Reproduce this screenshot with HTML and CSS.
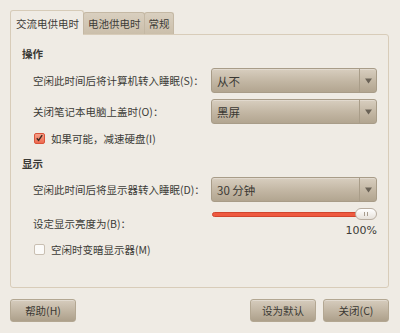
FILE: index.html
```html
<!DOCTYPE html>
<html lang="zh">
<head>
<meta charset="utf-8">
<link rel="stylesheet" href="styles.css">
</head>
<body>
<div class="dialog">
  <div class="tabs">
    <div class="tab active">交流电供电时</div>
    <div class="tab">电池供电时</div>
    <div class="tab">常规</div>
  </div>
  <div class="panel">
    <div class="section">操作</div>
    <div class="row r1">
      <span class="label">空闲此时间后将计算机转入睡眠(S)：</span>
      <div class="combo"><span class="ctext">从不</span><span class="carrow"><svg width="7" height="6" viewBox="0 0 7 6"><path d="M0 0.5h7L3.5 5.5z" fill="#6a6256"/></svg></span></div>
    </div>
    <div class="row r2">
      <span class="label">关闭笔记本电脑上盖时(O)：</span>
      <div class="combo"><span class="ctext">黑屏</span><span class="carrow"><svg width="7" height="6" viewBox="0 0 7 6"><path d="M0 0.5h7L3.5 5.5z" fill="#6a6256"/></svg></span></div>
    </div>
    <div class="check c1">
      <span class="box checked"><svg width="10" height="10" viewBox="0 0 10 10"><path d="M2 5.2 L4 7.6 L8 1.8" fill="none" stroke="#3a2a22" stroke-width="1.6"/></svg></span>
      <span>如果可能，减速硬盘(I)</span>
    </div>
    <div class="section s2">显示</div>
    <div class="row r3">
      <span class="label">空闲此时间后将显示器转入睡眠(D)：</span>
      <div class="combo"><span class="ctext">30 分钟</span><span class="carrow"><svg width="7" height="6" viewBox="0 0 7 6"><path d="M0 0.5h7L3.5 5.5z" fill="#6a6256"/></svg></span></div>
    </div>
    <div class="row bright">
      <span class="label">设定显示亮度为(B)：</span>
      <div class="sliderbox">
        <div class="slider">
          <div class="track"></div>
          <div class="thumb"><span></span><span></span></div>
        </div>
        <div class="value">100%</div>
      </div>
    </div>
    <div class="check c2">
      <span class="box"></span>
      <span>空闲时变暗显示器(M)</span>
    </div>
  </div>
  <div class="buttons">
    <button class="btn">帮助(H)</button>
    <div class="spacer"></div>
    <button class="btn">设为默认</button>
    <button class="btn">关闭(C)</button>
  </div>
</div>
</body>
</html>
```

FILE: styles.css
```css
html, body {
  margin: 0;
  padding: 0;
}
body {
  background: #efebe4;
  width: 400px;
  height: 333px;
  overflow: hidden;
  font-family: "Noto Sans CJK SC", "Noto Sans", "DejaVu Sans", sans-serif;
  font-size: 10.5px;
  color: #3c3b37;
  white-space: nowrap;
}
.dialog {
  display: flex;
  flex-direction: column;
  padding: 10px 11px 0 10px;
}
.tabs {
  display: flex;
  align-items: flex-end;
  height: 24px;
  position: relative;
  z-index: 2;
}
.tab {
  height: 21px;
  line-height: 22px;
  padding: 0 3px 0 4px;
  background: linear-gradient(#d9cfbf, #cbbfab);
  border: 1px solid #c4b8a4;
  border-bottom: none;
  border-radius: 3px 3px 0 0;
  margin-left: -1px;
  color: #3c3b37;
}
.tab.active {
  height: 24px;
  line-height: 26px;
  background: #efebe4;
  border-color: #d6cbb8;
  margin-left: 0;
  padding: 0 4px 0 5px;
  margin-bottom: -1px;
}
.panel {
  height: 252px;
  border: 1px solid #d8ccb9;
  border-radius: 0 3px 3px 3px;
  padding: 0 11px 0 11px;
  display: flex;
  flex-direction: column;
}
.section {
  font-weight: bold;
  height: 16px;
  line-height: 16px;
  margin-top: 11px;
  color: #3a3935;
}
.section.s2 {
  margin-top: 10px;
}
.row {
  display: flex;
  align-items: center;
  padding-left: 11px;
}
.row .label {
  flex: 1;
}
.r1 { margin-top: 6px; }
.r2 { margin-top: 6px; }
.r3 { margin-top: 5px; }
.combo {
  width: 164px;
  height: 23px;
  border: 1px solid #a89c88;
  border-radius: 3px;
  background: linear-gradient(#d8cebf, #c2b6a3 55%, #b2a590);
  display: flex;
  align-items: center;
  box-shadow: inset 0 1px 0 rgba(255,255,255,0.25);
}
.ctext {
  flex: 1;
  padding-left: 5px;
  font-size: 11.5px;
  color: #3a3833;
}
.carrow {
  width: 16px;
  height: 23px;
  border-left: 1px solid #a99d89;
  display: flex;
  align-items: center;
  justify-content: center;
}
.check {
  display: flex;
  align-items: center;
  height: 16px;
  padding-left: 12px;
}
.c1 { margin-top: 6px; }
.c2 { margin-top: 2px; }
.box {
  width: 9px;
  height: 9px;
  border: 1px solid #c9bfb2;
  border-radius: 2px;
  background: #fbfaf8;
  margin-right: 6px;
  display: flex;
  align-items: center;
  justify-content: center;
}
.box.checked {
  border-color: #d9533a;
  background: linear-gradient(#f6a088, #ee6a50);
}
.bright {
  margin-top: 5px;
  height: 32px;
}
.sliderbox {
  width: 166px;
  display: flex;
  flex-direction: column;
  align-items: flex-end;
}
.slider {
  width: 166px;
  height: 12px;
  position: relative;
}
.track {
  position: absolute;
  left: 1px;
  right: 10px;
  top: 4px;
  height: 3px;
  background: #ee5a40;
  border: 1px solid #d2452e;
  border-radius: 3px;
}
.thumb {
  position: absolute;
  right: 0;
  top: 0;
  width: 20px;
  height: 10px;
  border: 1px solid #b8ada0;
  border-radius: 6px;
  background: linear-gradient(#ffffff, #e6e1da);
  display: flex;
  justify-content: center;
  align-items: center;
  gap: 2px;
}
.thumb span {
  width: 1px;
  height: 4px;
  background: #a79c8e;
}
.value {
  margin-top: 4px;
  font-family: "DejaVu Sans", sans-serif;
  font-size: 11px;
  line-height: 14px;
  color: #3c3b37;
}
.buttons {
  display: flex;
  margin-top: 11px;
  gap: 7px;
}
.spacer { flex: 1; }
.btn {
  width: 66px;
  height: 23px;
  padding: 0;
  border: 1px solid #b3a792;
  border-radius: 3px;
  background: linear-gradient(#d6ccbd, #c0b4a1 55%, #ada08b);
  font-family: "Noto Sans CJK SC", "Noto Sans", sans-serif;
  font-size: 10.5px;
  color: #3a3833;
  box-shadow: inset 0 1px 0 rgba(255,255,255,0.3);
}
```
